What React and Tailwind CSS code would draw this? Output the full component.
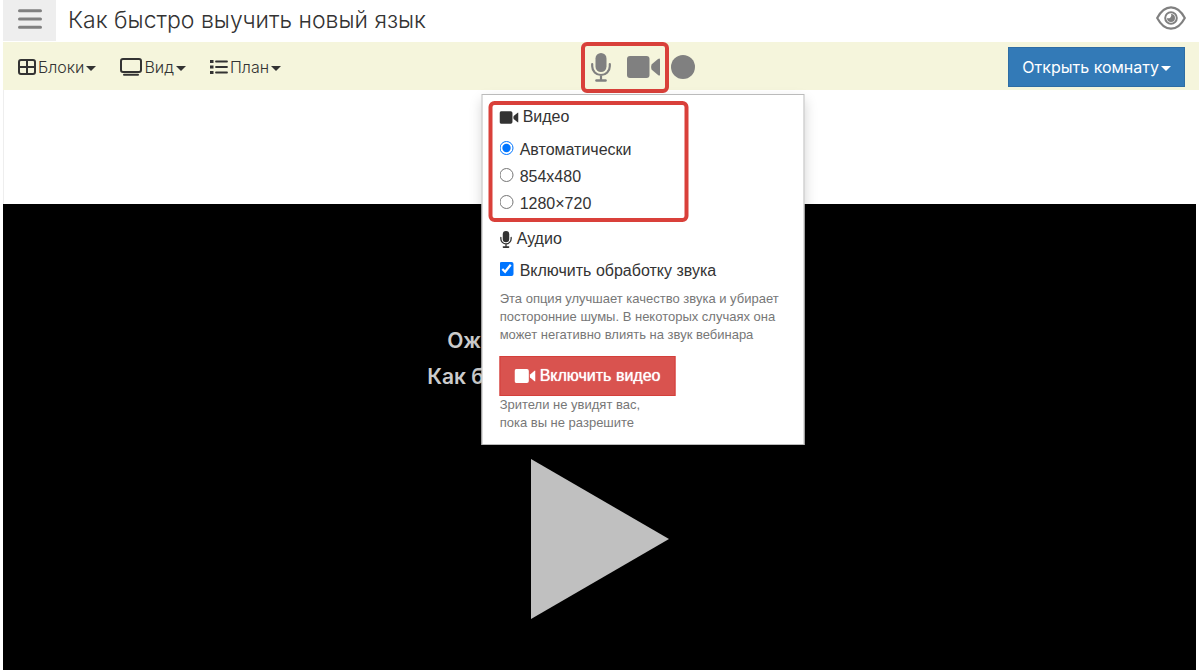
import { useState } from 'react'

const MicIcon = ({ className }) => (
  <svg viewBox="0 0 20 29" className={className} aria-hidden="true">
    <rect x="4.500" y="0" width="11" height="19" rx="5.500" fill="currentColor" />
    <path d="M1.2 11v2.2a8.8 8.8 0 0 0 17.6 0V11M10 22v5" fill="none" stroke="currentColor" strokeWidth="2.2" strokeLinecap="round" />
    <path d="M5.5 27.5h9" stroke="currentColor" strokeWidth="2.6" strokeLinecap="round" />
  </svg>
)

const CameraIcon = ({ className }) => (
  <svg viewBox="0 0 33 22" className={className} fill="currentColor" aria-hidden="true">
    <rect width="22.5" height="22" rx="3" />
    <path d="M24.5 8.5 31 3Q33 1.600 33 3.600V18.400Q33 20.400 31 19L24.500 13.500Q23.600 11 24.500 8.500Z" />
  </svg>
)

const MenuIcon = () => (
  <svg viewBox="0 0 24 20" className="h-5 w-6" stroke="currentColor" strokeWidth="3" strokeLinecap="round" aria-hidden="true">
    <path d="M1.5 1.7h21M1.5 10h21M1.5 18.2h21" />
  </svg>
)

const GridIcon = () => (
  <svg viewBox="0 0 18 16" className="h-4 w-[18px]" fill="none" stroke="currentColor" strokeWidth="2" aria-hidden="true">
    <rect x="1" y="1" width="16" height="14" rx="2" />
    <path d="M9 1v14M1 8h16" />
  </svg>
)

const ScreenIcon = () => (
  <svg viewBox="0 0 22 18" className="h-[18px] w-[22px]" fill="none" stroke="currentColor" strokeWidth="2" aria-hidden="true">
    <rect x="1" y="1" width="20" height="13" rx="2" />
    <path d="M4 16.7h14" strokeLinecap="round" />
  </svg>
)

const ListIcon = () => (
  <svg viewBox="0 0 18 14" className="h-3.5 w-[18px]" aria-hidden="true">
    <path d="M0 0h3.5v3H0zM0 5.5h3.5v3H0zM0 11h3.5v3H0z" fill="currentColor" />
    <path d="M6 1.5h11M6 7h11M6 12.5h11" stroke="currentColor" strokeWidth="1.8" strokeLinecap="round" />
  </svg>
)

const EyeIcon = () => (
  <svg viewBox="0 0 30 24" className="h-6 w-[30px]" fill="none" stroke="currentColor" aria-hidden="true">
    <path d="M1.2 12C5 4.8 9.8 1.300 15 1.300S25 4.800 28.800 12c-3.800 7.200-8.600 10.700-13.800 10.700S5 19.200 1.200 12Z" strokeWidth="2.2" />
    <circle cx="15" cy="12" r="5.8" strokeWidth="2" />
    <path d="M15 8a4 4 0 1 1-4 4A3 3 0 0 0 15 8Z" fill="currentColor" stroke="none" />
  </svg>
)

const Caret = () => (
  <svg viewBox="0 0 10 5" className="mt-0.5 h-[5px] w-2.5" fill="currentColor" aria-hidden="true">
    <path d="M0 0h10L5 5z" />
  </svg>
)

const menus = [
  { label: 'Блоки', icon: <GridIcon /> },
  { label: 'Вид', icon: <ScreenIcon /> },
  { label: 'План', icon: <ListIcon /> },
]

const resolutions = ['Автоматически', '854x480', '1280×720']

const MediaPopover = () => {
  const [resolution, setResolution] = useState(resolutions[0])
  const [processing, setProcessing] = useState(true)

  return (
    <div className="absolute top-full left-1/2 z-10 mt-4 w-[323px] -translate-x-1/2 border border-[#bbbbbb] bg-white px-[17px] pt-1.5 pb-3 text-left font-['Liberation_Sans',Arial,sans-serif] text-base text-[#333333] shadow-[0_6px_12px_rgba(0,0,0,0.175)]">
      <fieldset className="-ml-[11px] w-[200px] rounded-md border-4 border-[#d9403a] px-[7px] pb-px">
        <div className="mb-[7px] flex h-6 items-center gap-1">
          <CameraIcon className="h-[13px] w-[19px]" />
          <span>Видео</span>
        </div>
        {resolutions.map((item) => (
          <label key={item} className="flex h-[27px] items-center gap-1.5">
            <input
              type="radio"
              name="resolution"
              className="mb-1 size-3.5"
              checked={resolution === item}
              onChange={() => setResolution(item)}
            />
            {item}
          </label>
        ))}
      </fieldset>

      <div className="mt-[5px] mb-1.5 flex h-6 items-center gap-1">
        <MicIcon className="h-[17px] w-[13px]" />
        <span>Аудио</span>
      </div>
      <label className="mb-1.5 flex h-[27px] items-center gap-1.5">
        <input
          type="checkbox"
          className="mb-1 size-3.5"
          checked={processing}
          onChange={(e) => setProcessing(e.target.checked)}
        />
        Включить обработку звука
      </label>
      <p className="text-[13px] leading-[18px] text-[#777777]">
        Эта опция улучшает качество звука и убирает посторонние шумы. В некоторых случаях она может негативно влиять на звук вебинара
      </p>

      <button type="button" className="mt-3 flex h-10 items-center gap-1 border border-[#d43f3a] bg-[#d9534f] px-3.5 text-white">
        <CameraIcon className="h-3.5 w-[21px]" />
        <span className="[text-shadow:0_0_1px_#ffffff]">Включить видео</span>
      </button>
      <p className="text-[13px] leading-[18px] text-[#777777]">
        Зрители не увидят вас,
        <br />
        пока вы не разрешите
      </p>
    </div>
  )
}

const Toolbar = () => (
  <div className="flex h-12 items-center justify-between bg-[#f5f5dc] pt-0.5 pr-3.5 pl-[15px]">
    <nav className="flex items-center gap-6">
      {menus.map((menu) => (
        <button key={menu.label} type="button" className="flex items-center gap-0.5 text-base font-light">
          {menu.icon}
          {menu.label}
          <Caret />
        </button>
      ))}
    </nav>

    <div className="mr-3.5 flex items-center gap-0.5 text-[#808080]">
      <div className="flex h-[51px] w-[88px] items-center justify-between rounded-md border-4 border-[#d9403a] pr-[5px] pl-1">
        <button type="button" aria-label="Микрофон" className="px-0.5">
          <MicIcon className="h-[29px] w-5" />
        </button>
        <div className="relative">
          <button type="button" aria-label="Камера" className="block">
            <CameraIcon className="h-[22px] w-[33px]" />
          </button>
          <MediaPopover />
        </div>
      </div>
      <button type="button" aria-label="Запись" className="size-6 rounded-full bg-[#808080]" />
    </div>

    <button type="button" className="flex h-10 items-center gap-0.5 border border-[#2e6da4] bg-[#337ab7] px-[13px] text-base text-white">
      Открыть комнату
      <Caret />
    </button>
  </div>
)

const App = () => {
  return (
    <div className="flex h-screen flex-col overflow-hidden bg-white pl-[3px] font-['Inter',sans-serif] text-[#333333]">
      <header className="flex h-[42px] shrink-0 items-start">
        <button type="button" aria-label="Меню" className="flex h-[41px] w-[53px] items-center justify-center bg-[#eeeeee] pb-1 text-[#808080]">
          <MenuIcon />
        </button>
        <h1 className="flex-1 pt-1 pl-3 text-[23px] leading-8 font-light">Как быстро выучить новый язык</h1>
        <button type="button" aria-label="Просмотр" className="mt-1.5 mr-[13px] text-[#808080]">
          <EyeIcon />
        </button>
      </header>

      <Toolbar />

      <main className="flex flex-1 flex-col border-l border-[#eeeeee] pt-[114px]">
        <section className="mr-[3px] -ml-px flex flex-1 flex-col items-center bg-black pt-[119px] text-center text-[21px] leading-9 font-semibold text-[#cccccc]">
          <p>Ожидается начало вебинара</p>
          <p>Как быстро выучить новый язык</p>
          <button type="button" aria-label="Воспроизвести" className="mt-16">
            <svg viewBox="0 0 138 160" className="h-40 w-[138px]" aria-hidden="true">
              <path d="M0 0 138 80 0 160z" fill="#c0c0c0" />
            </svg>
          </button>
        </section>
      </main>
    </div>
  )
}

export default App
